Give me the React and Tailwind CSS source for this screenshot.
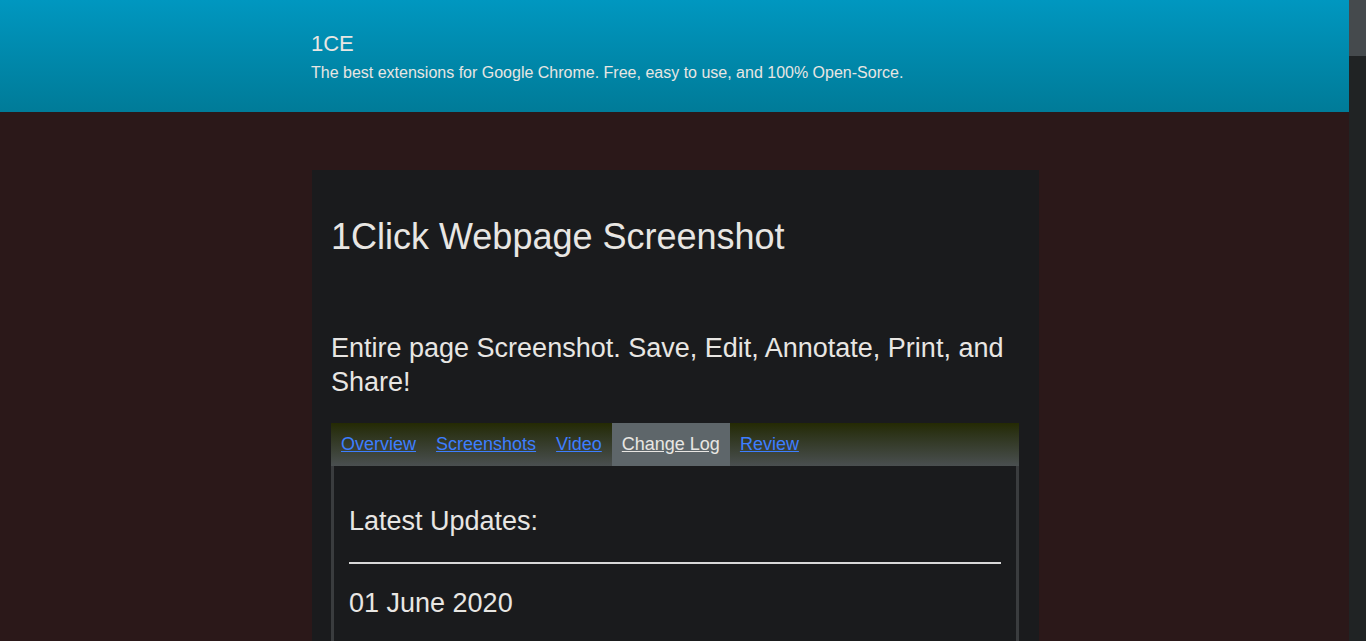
import React from "react";

const font = { fontFamily: '"Liberation Sans", Arial, sans-serif' };

export default function App() {
  const tabs = ["Overview", "Screenshots", "Video", "Change Log", "Review"];
  return (
    <div className="flex h-[641px] w-[1366px] overflow-hidden bg-[#2b1819] text-[#e8e6e3]" style={font}>
      <div className="h-[641px] w-[1349px] overflow-hidden">
        <header className="h-[112px] bg-gradient-to-b from-[#0097c0] to-[#007b98]">
          <div className="ml-[311px] w-[727px] pt-[29px]">
            <div className="text-[22px] leading-[30px]">1CE</div>
            <div className="mt-[4px] text-[16px] leading-[20px]">The best extensions for Google Chrome. Free, easy to use, and 100% Open-Sorce.</div>
          </div>
        </header>
        <main className="pt-[58px]">
          <div className="ml-[312px] h-[500px] w-[727px] bg-[#1a1b1d] pl-[19px] pr-[20px] pt-[46px]">
            <h1 className="text-[36px] leading-[42px]">1Click Webpage Screenshot</h1>
            <p className="mt-[73px] text-[27px] leading-[34px]">Entire page Screenshot. Save, Edit, Annotate, Print, and Share!</p>
            <div className="mt-[24px]">
              <nav className="flex h-[43px] bg-gradient-to-b from-[#242a03] to-[#4a4f50] text-[18px]">
                {tabs.map((t) => (
                  <a
                    key={t}
                    href="#"
                    className={
                      t === "Change Log"
                        ? "flex items-center bg-[#5e666a] px-[10px] text-[#e8e6e3] underline"
                        : "flex items-center px-[10px] text-[#3d7eff] underline"
                    }
                  >
                    {t}
                  </a>
                ))}
              </nav>
              <div className="h-[300px] border-x-[3px] border-[#3a3c3e] px-[15px] pt-[38px]">
                <h3 className="text-[27px] leading-[34px]">Latest Updates:</h3>
                <hr className="mt-[24px] border-0 border-t-2 border-[#d8d8d8]" />
                <h4 className="mt-[22px] text-[27px] leading-[34px]">01 June 2020</h4>
              </div>
            </div>
          </div>
        </main>
      </div>
      <div className="h-[641px] w-[17px] bg-[#202324]">
        <div className="h-[56px] w-full bg-[#454a4d]" />
      </div>
    </div>
  );
}
